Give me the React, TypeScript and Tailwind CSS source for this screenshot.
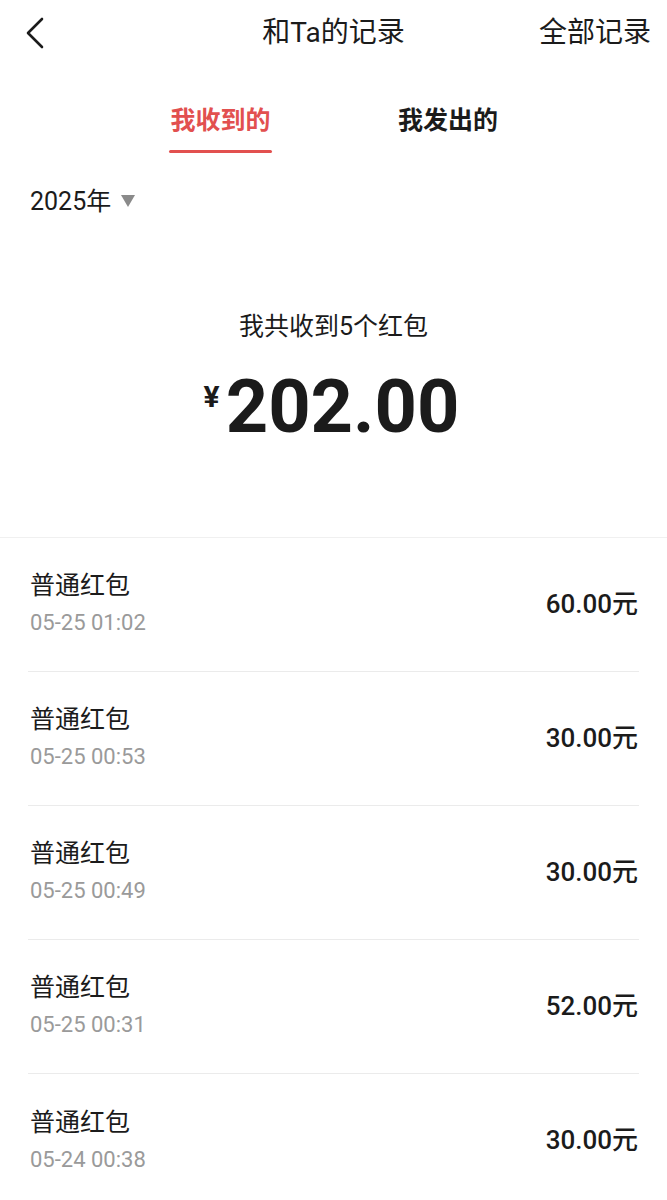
import React from 'react';

const rows = [
  { time: '05-25 01:02', amount: '60.00' },
  { time: '05-25 00:53', amount: '30.00' },
  { time: '05-25 00:49', amount: '30.00' },
  { time: '05-25 00:31', amount: '52.00' },
  { time: '05-24 00:38', amount: '30.00' },
];

const font = { fontFamily: 'Roboto, "Noto Sans CJK SC", sans-serif' };

export default function App() {
  return (
    <div className="min-h-screen bg-white text-[#1b1b1b]" style={font}>
      {/* Header */}
      <header className="h-[66px] px-[26px] flex items-center justify-between relative">
        <svg width="20" height="32" viewBox="0 0 20 32" fill="none" className="ml-[-1px]">
          <path d="M17 2 L3 16 L17 30" stroke="#1b1b1b" strokeWidth="2.6" strokeLinecap="round" strokeLinejoin="round" />
        </svg>
        <h1 className="absolute left-1/2 -translate-x-1/2 text-[28px] leading-none">和Ta的记录</h1>
        <span className="text-[28px] leading-none mr-[-10px]">全部记录</span>
      </header>

      {/* Tabs */}
      <div className="flex justify-center gap-[126px] pt-[37px]">
        <div className="flex flex-col items-center">
          <span className="text-[25px] leading-[36px] font-bold text-[#e2504f]">我收到的</span>
          <div className="mt-[11px] h-[3px] w-[103px] bg-[#e2504f] rounded-sm" />
        </div>
        <span className="text-[25px] leading-[36px] font-bold">我发出的</span>
      </div>

      {/* Year */}
      <div className="flex items-center gap-[10px] px-[30px] mt-[30px] h-[36px]">
        <span className="text-[25px] leading-none">2025年</span>
        <svg width="14" height="12" viewBox="0 0 14 12">
          <path d="M0 0 H14 L7 12 Z" fill="#8a8a8a" />
        </svg>
      </div>

      {/* Summary */}
      <div className="flex flex-col items-center pt-[91px] h-[318px]">
        <p className="text-[25px] leading-[34px]">我共收到5个红包</p>
        <div className="flex items-start mt-[28px] ml-[-4px]">
          <span className="text-[30px] font-bold leading-none mt-[10px] mr-[6px]">¥</span>
          <span className="text-[74px] font-bold leading-[70px]">202.00</span>
        </div>
      </div>

      <div className="h-px bg-[#f0f0f0]" />

      {/* List */}
      <ul className="px-[28px]">
        {rows.map((r, i) => (
          <li
            key={i}
            className={`h-[134px] flex items-center justify-between ${i < rows.length - 1 ? 'border-b border-[#ebebeb]' : ''}`}
          >
            <div className="flex flex-col pl-[2px] mt-[-3px]">
              <span className="text-[25px] leading-[32px]">普通红包</span>
              <span className="text-[22px] leading-[26px] text-[#9a9a9a] mt-[8px]">{r.time}</span>
            </div>
            <span className="text-[26px] font-medium leading-none mr-[1px] mt-[-2px]">{r.amount}元</span>
          </li>
        ))}
      </ul>
    </div>
  );
}
